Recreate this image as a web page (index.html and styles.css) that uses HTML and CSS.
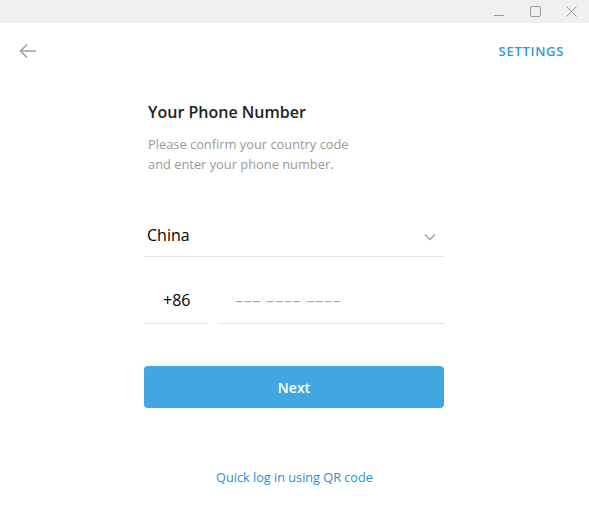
FILE: index.html
```html
<!DOCTYPE html>
<html>
<head>
<meta charset="utf-8">
<link rel="stylesheet" href="styles.css">
</head>
<body>
<div class="window">
  <div class="titlebar">
    <span class="wbtn">
      <svg width="10" height="10" viewBox="0 0 10 10"><path d="M0 8.5H10" stroke="#9a9a9a" stroke-width="1"/></svg>
    </span>
    <span class="wbtn">
      <svg width="11" height="11" viewBox="0 0 11 11"><rect x="0.5" y="0.5" width="10" height="10" rx="1.5" fill="none" stroke="#9a9a9a" stroke-width="1"/></svg>
    </span>
    <span class="wbtn">
      <svg width="11" height="11" viewBox="0 0 11 11"><path d="M0.5 0.5L10.5 10.5M10.5 0.5L0.5 10.5" stroke="#9a9a9a" stroke-width="1"/></svg>
    </span>
  </div>
  <div class="topbar">
    <span class="back">
      <svg width="18" height="16" viewBox="0 0 18 16"><path d="M17 8H2M8 1.5L1.5 8L8 14.5" fill="none" stroke="#a0a0a0" stroke-width="1.6"/></svg>
    </span>
    <span class="settings">SETTINGS</span>
  </div>
  <div class="form">
    <div class="title">Your Phone Number</div>
    <div class="desc">Please confirm your country code<br>and enter your phone number.</div>
    <div class="country">
      <span>China</span>
      <svg width="12" height="8" viewBox="0 0 12 8"><path d="M1 1.5L6 6.5L11 1.5" fill="none" stroke="#a0a0a0" stroke-width="1.4"/></svg>
    </div>
    <div class="phone-row">
      <div class="code">+86</div>
      <div class="number">––– –––– ––––</div>
    </div>
    <div class="next">Next</div>
  </div>
  <div class="qr">Quick log in using QR code</div>
</div>
</body>
</html>
```
FILE: styles.css
```css
html, body {
  margin: 0;
  padding: 0;
  background: #ffffff;
  font-family: "Open Sans", "Noto Sans", sans-serif;
}
.window {
  width: 589px;
  height: 523px;
  display: flex;
  flex-direction: column;
}
.titlebar {
  height: 23px;
  background: #f0f0f0;
  display: flex;
  justify-content: flex-end;
  align-items: center;
  padding-right: 0;
}
.wbtn {
  width: 36px;
  height: 23px;
  display: flex;
  align-items: center;
  justify-content: center;
}
.topbar {
  height: 56px;
  display: flex;
  align-items: center;
  justify-content: space-between;
  padding: 0 25px 0 19px;
}
.back {
  display: flex;
  width: 18px;
  height: 16px;
}
.settings {
  color: #2a9ae0;
  font-weight: 600;
  font-size: 13px;
  letter-spacing: 0.7px;
}
.form {
  width: 300px;
  margin-left: 144px;
  display: flex;
  flex-direction: column;
}
.title {
  font-size: 16px;
  font-weight: 600;
  color: #222;
  padding-left: 4px;
  margin-top: 22px;
  line-height: 22px;
}
.desc {
  font-size: 12.85px;
  color: #999;
  line-height: 20px;
  padding-left: 4px;
  margin-top: 11px;
}
.country {
  margin-top: 40px;
  height: 43px;
  box-sizing: border-box;
  padding: 0 8px 1px 3px;
  border-bottom: 1px solid #e0e0e0;
  display: flex;
  justify-content: space-between;
  align-items: center;
  font-size: 16px;
  color: #000;
}
.country svg {
  margin-top: 5px;
}
.phone-row {
  display: flex;
  gap: 11px;
  margin-top: 26px;
}
.code {
  width: 64px;
  height: 41px;
  border-bottom: 1px solid #e0e0e0;
  box-sizing: border-box;
  padding-left: 19px;
  font-size: 16px;
  color: #000;
  line-height: 35px;
}
.number {
  flex: 1;
  height: 41px;
  border-bottom: 1px solid #e0e0e0;
  box-sizing: border-box;
  padding-left: 16px;
  font-size: 16px;
  color: #aaa;
  line-height: 35px;
  letter-spacing: 0.8px;
}
.next {
  margin-top: 42px;
  height: 42px;
  background: #40a7e3;
  border-radius: 4px;
  color: #fff;
  font-weight: 600;
  font-size: 14px;
  display: flex;
  align-items: center;
  justify-content: center;
}
.qr {
  margin-top: 60px;
  text-align: center;
  color: #2b8fd6;
  font-size: 12.7px;
}
```
